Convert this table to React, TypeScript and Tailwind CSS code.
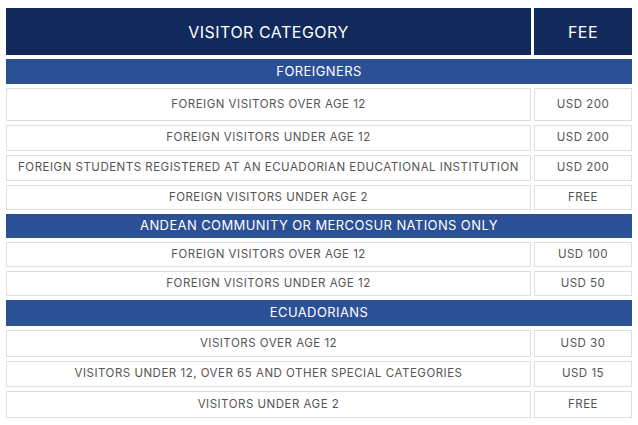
import React from "react";

type Row =
  | { kind: "cat"; label: string; h: string }
  | { kind: "row"; label: string; fee: string; h: string };

const rows: Row[] = [
  { kind: "cat", label: "FOREIGNERS", h: "h-[25px]" },
  { kind: "row", label: "FOREIGN VISITORS OVER AGE 12", fee: "USD 200", h: "h-[33px]" },
  { kind: "row", label: "FOREIGN VISITORS UNDER AGE 12", fee: "USD 200", h: "h-[26px]" },
  { kind: "row", label: "FOREIGN STUDENTS REGISTERED AT AN ECUADORIAN EDUCATIONAL INSTITUTION", fee: "USD 200", h: "h-[26px]" },
  { kind: "row", label: "FOREIGN VISITORS UNDER AGE 2", fee: "FREE", h: "h-[25px]" },
  { kind: "cat", label: "ANDEAN COMMUNITY OR MERCOSUR NATIONS ONLY", h: "h-[24px]" },
  { kind: "row", label: "FOREIGN VISITORS OVER AGE 12", fee: "USD 100", h: "h-[25px]" },
  { kind: "row", label: "FOREIGN VISITORS UNDER AGE 12", fee: "USD 50", h: "h-[25px]" },
  { kind: "cat", label: "ECUADORIANS", h: "h-[26px]" },
  { kind: "row", label: "VISITORS OVER AGE 12", fee: "USD 30", h: "h-[27px]" },
  { kind: "row", label: "VISITORS UNDER 12, OVER 65 AND OTHER SPECIAL CATEGORIES", fee: "USD 15", h: "h-[26px]" },
  { kind: "row", label: "VISITORS UNDER AGE 2", fee: "FREE", h: "h-[27px]" },
];

export default function App() {
  return (
    <div className="w-[638px] h-[425px] bg-white pt-[8px] pl-[6px] font-['Inter',sans-serif]">
      <div className="w-[626px] flex flex-col gap-[4px]">
        <div className="flex gap-[3px] h-[47px]">
          <div className="w-[525px] bg-[#12295b] flex items-center justify-center text-white text-[16px] tracking-[0.5px]">
            VISITOR CATEGORY
          </div>
          <div className="w-[98px] bg-[#12295b] flex items-center justify-center text-white text-[16px] tracking-[0.5px]">
            FEE
          </div>
        </div>
        {rows.map((r, i) =>
          r.kind === "cat" ? (
            <div
              key={i}
              className={`${r.h} bg-[#2c5095] flex items-center justify-center text-white text-[13px] tracking-[0.4px]`}
            >
              {r.label}
            </div>
          ) : (
            <div key={i} className={`${r.h} flex gap-[3px]`}>
              <div className="w-[525px] border border-[#dedede] flex items-center justify-center text-[#555555] text-[11.5px] tracking-[0.5px]">
                {r.label}
              </div>
              <div className="w-[98px] border border-[#dedede] flex items-center justify-center text-[#555555] text-[11.5px] tracking-[0.5px]">
                {r.fee}
              </div>
            </div>
          )
        )}
      </div>
    </div>
  );
}
